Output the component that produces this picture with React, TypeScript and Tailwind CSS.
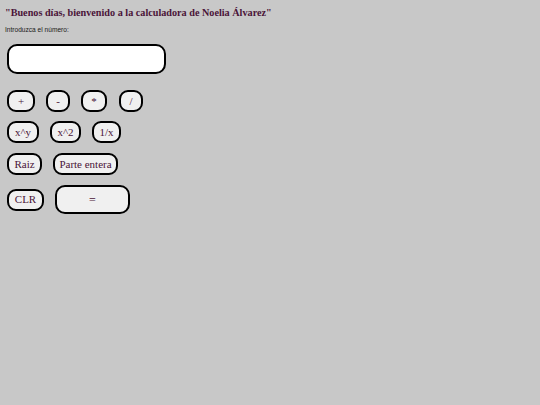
import { useState } from 'react'

const btn =
  'h-[22px] rounded-[9px] border-2 border-black bg-[#f0f0f0] text-[11px] leading-none text-[#4a1438] flex items-center justify-center'

export default function App() {
  const [value, setValue] = useState('')

  return (
    <div className="min-h-[405px] w-full bg-[#c8c8c8] px-[5px] pt-[6px]" style={{ fontFamily: '"Liberation Serif", serif' }}>
      <h1 className="text-[10.2px] font-bold leading-[14px] text-[#4a1438]">
        "Buenos días, bienvenido a la calculadora de Noelia Álvarez"
      </h1>
      <p className="mt-[5px] text-[6.6px] leading-[9px] text-[#1a1a1a]" style={{ fontFamily: '"Liberation Sans", Arial, sans-serif' }}>
        Introduzca el número:
      </p>

      <div className="ml-[2px] mt-[10px]">
        <input
          value={value}
          onChange={e => setValue(e.target.value)}
          className="h-[30px] w-[159px] rounded-[10px] border-2 border-black bg-white px-2 text-sm outline-none"
        />
      </div>

      <div className="ml-[2px] mt-[16px] flex flex-col gap-[9px]">
        <div className="flex gap-[11px]">
          <button className={`${btn} w-[28px]`}>+</button>
          <button className={`${btn} w-[24px]`}>-</button>
          <button className={`${btn} w-[26px]`}>*</button>
          <button className={`${btn} ml-[1px] w-[24px]`}>/</button>
        </div>
        <div className="flex gap-[11px]">
          <button className={`${btn} w-[32px]`}>x^y</button>
          <button className={`${btn} w-[31px]`}>x^2</button>
          <button className={`${btn} w-[29px]`}>1/x</button>
        </div>
        <div className="mt-[1px] flex gap-[11px]">
          <button className={`${btn} w-[35px]`}>Raiz</button>
          <button className={`${btn} w-[65px]`}>Parte entera</button>
        </div>
        <div className="mt-[1px] flex items-center gap-[11px]">
          <button className={`${btn} w-[37px]`}>CLR</button>
          <button className={`${btn} h-[29px] w-[75px] rounded-[10px] text-[12px]`}>=</button>
        </div>
      </div>
    </div>
  )
}
